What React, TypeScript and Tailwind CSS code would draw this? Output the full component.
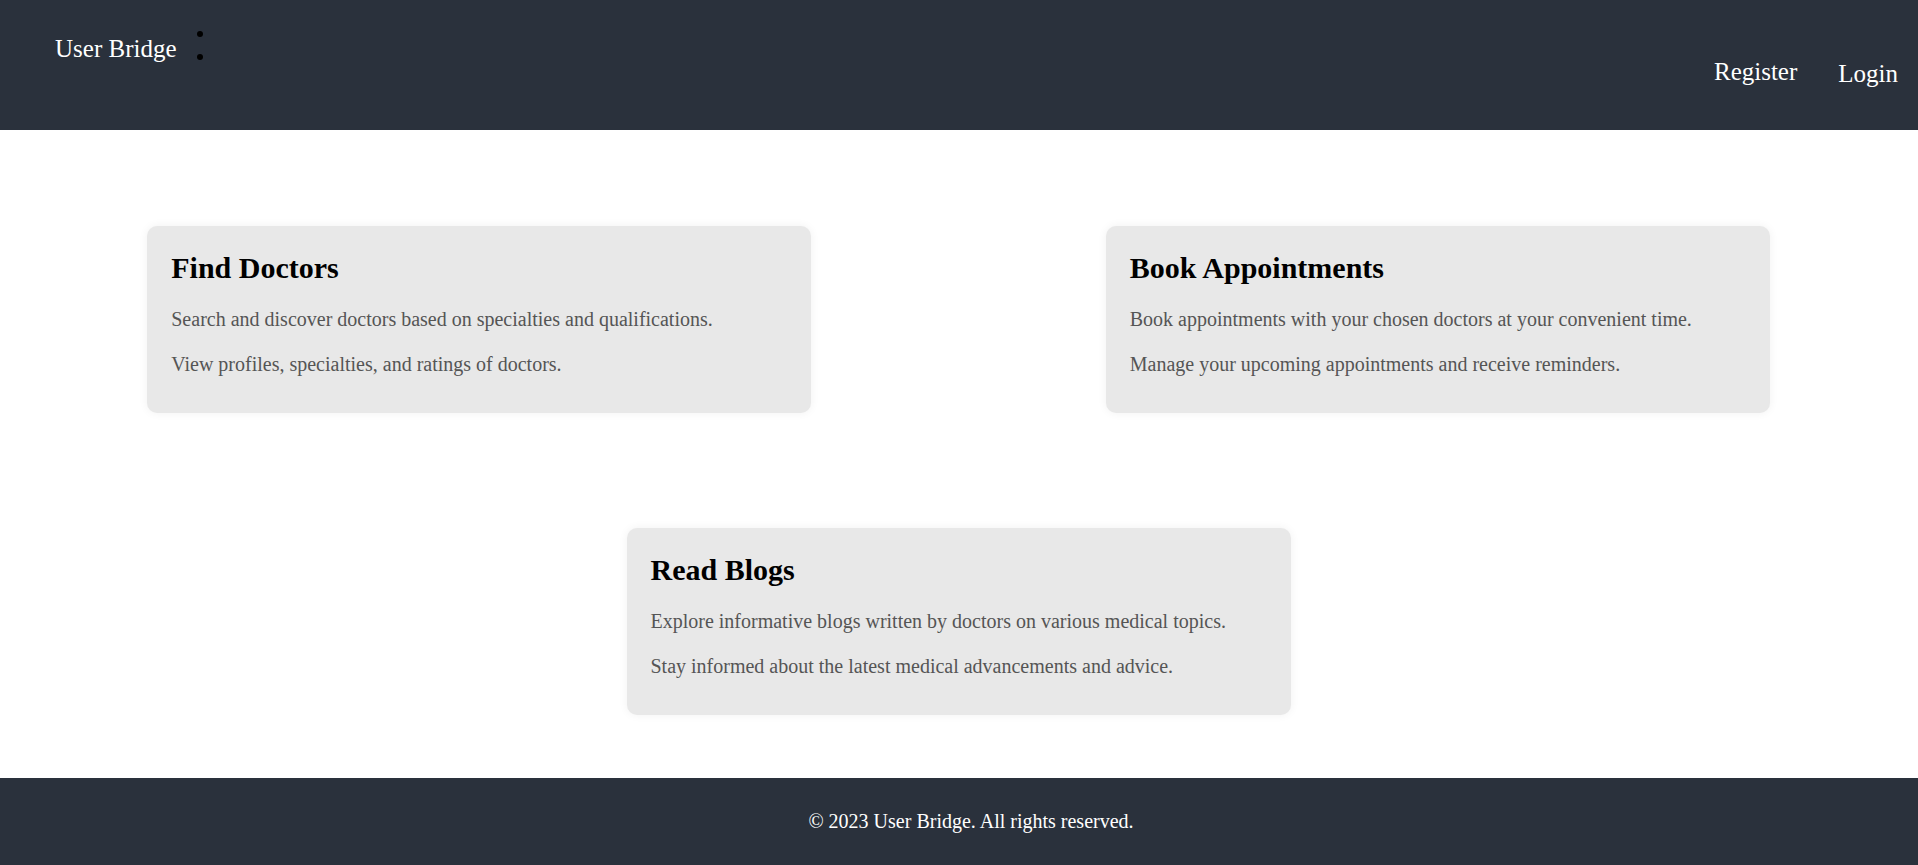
const features = [
  {
    title: "Find Doctors",
    lines: [
      "Search and discover doctors based on specialties and qualifications.",
      "View profiles, specialties, and ratings of doctors.",
    ],
  },
  {
    title: "Book Appointments",
    lines: [
      "Book appointments with your chosen doctors at your convenient time.",
      "Manage your upcoming appointments and receive reminders.",
    ],
  },
  {
    title: "Read Blogs",
    lines: [
      "Explore informative blogs written by doctors on various medical topics.",
      "Stay informed about the latest medical advancements and advice.",
    ],
  },
];

function FeatureCard({ title, lines }: { title: string; lines: string[] }) {
  return (
    <div className="w-[664px] rounded-[10px] bg-[#e8e8e8] px-[24px] pt-[25px] pb-[35px] shadow-[0_0_10px_rgba(0,0,0,0.06)]">
      <h2 className="mb-[22px] text-[30px] font-bold leading-[34px] text-black">
        {title}
      </h2>
      {lines.map((line, i) => (
        <p
          key={i}
          className={`text-[20px] leading-[25px] text-[#555555] ${
            i < lines.length - 1 ? "mb-[20px]" : ""
          }`}
        >
          {line}
        </p>
      ))}
    </div>
  );
}

export default function App() {
  return (
    <div className="flex min-h-screen flex-col bg-white font-['Liberation_Serif','Times_New_Roman',serif] text-[20px]">
      <header className="flex h-[130px] items-start justify-between bg-[#2a313c] pl-[55px] pr-[20px]">
        <div className="flex items-start">
          <span className="mt-[35px] text-[25px] leading-[28px] text-white">
            User Bridge
          </span>
          <div className="ml-[20px] mt-[31px] flex flex-col gap-[17px]">
            <span className="block h-[6px] w-[6px] rounded-full bg-black" />
            <span className="block h-[6px] w-[6px] rounded-full bg-black" />
          </div>
        </div>
        <nav className="flex items-start gap-[41px]">
          <a className="mt-[58px] text-[25px] leading-[28px] text-white">
            Register
          </a>
          <a className="mt-[60px] text-[25px] leading-[28px] text-white">
            Login
          </a>
        </nav>
      </header>

      <main className="flex flex-1 flex-wrap justify-around gap-y-[115px] pt-[96px] pb-[63px] pr-[1px]">
        {features.map((f) => (
          <FeatureCard key={f.title} title={f.title} lines={f.lines} />
        ))}
      </main>

      <footer className="bg-[#2a313c] py-[32px] pl-[24px] text-center text-[20px] leading-[23px] text-white">
        © 2023 User Bridge. All rights reserved.
      </footer>
    </div>
  );
}
